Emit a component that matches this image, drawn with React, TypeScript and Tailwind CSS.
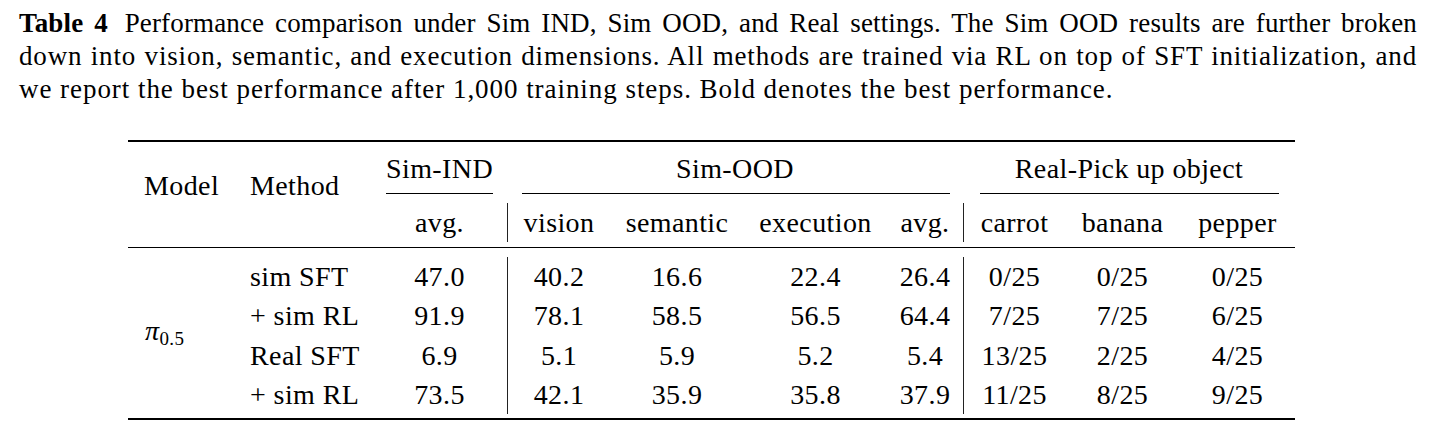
import React from "react";

const rows: string[][] = [
  ["sim SFT", "47.0", "40.2", "16.6", "22.4", "26.4", "0/25", "0/25", "0/25"],
  ["+ sim RL", "91.9", "78.1", "58.5", "56.5", "64.4", "7/25", "7/25", "6/25"],
  ["Real SFT", "6.9", "5.1", "5.9", "5.2", "5.4", "13/25", "2/25", "4/25"],
  ["+ sim RL", "73.5", "42.1", "35.9", "35.8", "37.9", "11/25", "8/25", "9/25"],
];

function DataCell({ value, idx }: { value: string; idx: number }) {
  if (idx === 0) {
    return <div className="h-[39.3px] leading-[39.3px] pl-[14px] whitespace-nowrap">{value}</div>;
  }
  const bordered = idx === 2 || idx === 6;
  return (
    <div
      className={
        bordered
          ? "h-[39.3px] leading-[39.3px] text-center whitespace-nowrap border-l border-[#222]"
          : "h-[39.3px] leading-[39.3px] text-center whitespace-nowrap"
      }
    >
      {value}
    </div>
  );
}

function SubHead({ label, bordered }: { label: string; bordered?: boolean }) {
  return (
    <div className="pt-[9px] pb-[5px]">
      <div
        className={
          bordered
            ? "h-[39px] leading-[39px] text-center whitespace-nowrap border-l border-[#222]"
            : "h-[39px] leading-[39px] text-center whitespace-nowrap"
        }
      >
        {label}
      </div>
    </div>
  );
}

export default function App() {
  return (
    <div className="w-[1437px] h-[436px] bg-white text-black [font-family:'Liberation_Serif',serif] overflow-hidden">
      <div className="pl-[19px] w-[1417px] pt-[7px] text-[27px] leading-[33px]">
        <div className="h-[33px] text-justify [text-align-last:justify] tracking-[0.15px]">
          <span className="font-bold mr-[6px]">Table 4</span> Performance comparison under Sim IND, Sim OOD, and Real settings. The Sim OOD results are further broken
        </div>
        <div className="h-[33px] text-justify [text-align-last:justify] tracking-[0.85px]">
          down into vision, semantic, and execution dimensions. All methods are trained via RL on top of SFT initialization, and
        </div>
        <div className="h-[33px] tracking-[0.95px]">we report the best performance after 1,000 training steps. Bold denotes the best performance.</div>
      </div>

      <div className="mt-[34px] ml-[128px] w-[1167px] border-t-2 border-b-2 border-black text-[28px] tracking-[0.4px] grid grid-cols-[108px_136px_135px_103px_134px_143px_76px_102px_115px_115px]">
        {/* Header row A */}
        <div className="row-span-2 pl-[16px] pt-[24px] leading-[39px] whitespace-nowrap">Model</div>
        <div className="row-span-2 pl-[14px] pt-[24px] leading-[39px] whitespace-nowrap">Method</div>
        <div className="pt-[7px]">
          <div className="h-[39px] leading-[39px] text-center whitespace-nowrap">Sim-IND</div>
          <div className="mt-[5px] h-px bg-black mx-[14px]" />
        </div>
        <div className="col-span-4 pt-[7px]">
          <div className="h-[39px] leading-[39px] text-center whitespace-nowrap">Sim-OOD</div>
          <div className="mt-[5px] h-px bg-black ml-[15px] mr-[13px]" />
        </div>
        <div className="col-span-3 pt-[7px]">
          <div className="h-[39px] leading-[39px] text-center whitespace-nowrap">Real-Pick up object</div>
          <div className="mt-[5px] h-px bg-black ml-[17px] mr-[16px]" />
        </div>

        {/* Header row B */}
        <SubHead label="avg." />
        <SubHead label="vision" bordered />
        <SubHead label="semantic" />
        <SubHead label="execution" />
        <SubHead label="avg." />
        <SubHead label="carrot" bordered />
        <SubHead label="banana" />
        <SubHead label="pepper" />

        {/* midrule */}
        <div className="col-span-10 h-px bg-black" />
        <div className="col-span-10 h-[9px]" />

        {/* data */}
        <div className="row-span-4 pl-[17px] pt-[54px] leading-[39px] whitespace-nowrap">
          <span className="italic">π</span>
          <sub className="text-[19px] not-italic">0.5</sub>
        </div>
        {rows.map((r, ri) =>
          r.map((v, ci) => <DataCell key={`${ri}-${ci}`} value={v} idx={ci} />)
        )}
        <div className="col-span-10 h-[3.8px]" />
      </div>
    </div>
  );
}
